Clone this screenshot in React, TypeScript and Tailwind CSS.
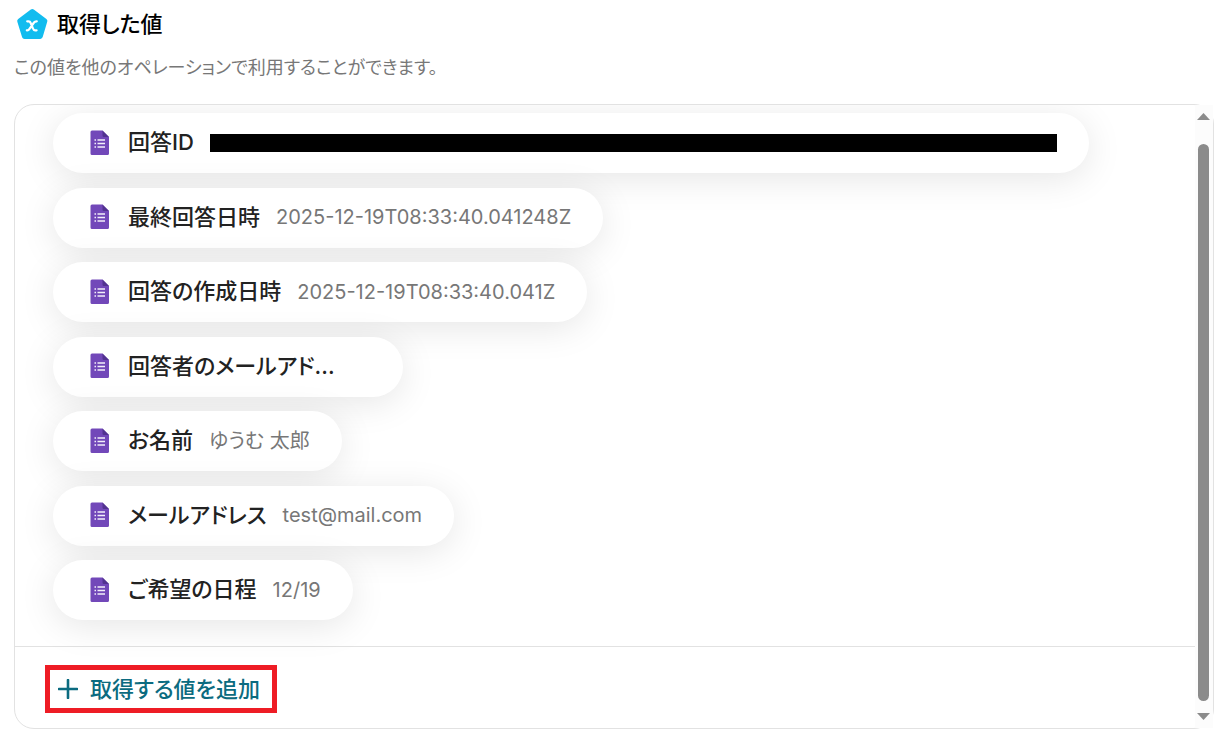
import React from "react";

type FormValue = {
  label: string;
  value?: string;
  redacted?: boolean;
};

const formValues: FormValue[] = [
  { label: "回答ID", redacted: true },
  { label: "最終回答日時", value: "2025-12-19T08:33:40.041248Z" },
  { label: "回答の作成日時", value: "2025-12-19T08:33:40.041Z" },
  { label: "回答者のメールアド..." },
  { label: "お名前", value: "ゆうむ 太郎" },
  { label: "メールアドレス", value: "test@mail.com" },
  { label: "ご希望の日程", value: "12/19" },
];

function OutputIcon() {
  return (
    <svg width="32" height="32" viewBox="0 0 32 32" className="shrink-0" aria-hidden="true">
      <path
        d="M16.3 3.6 28.900 12.900 24.300 28.400H8.500L3.700 12.900Z"
        fill="#12bcef"
        stroke="#12bcef"
        strokeWidth="5"
        strokeLinejoin="round"
      />
      <path
        d="M11.200 13.300H12.600C13.700 13.300 14.300 13.900 14.700 15L16.900 20.300C17.400 21.600 18 22.300 19.200 22.300H20.600M20.800 13.300H20.300C19.300 13.300 18.600 13.700 18 14.500L13.500 20.900C12.900 21.800 12.300 22.300 11.300 22.300H10.800"
        fill="none"
        stroke="#fff"
        strokeWidth="2.2"
        strokeLinecap="round"
      />
    </svg>
  );
}

function FormsIcon() {
  return (
    <svg width="20" height="26" viewBox="0 0 20 26" className="shrink-0" aria-hidden="true">
      <path
        d="M2 .5h10.500L19 7v16.500a1.500 1.500 0 0 1-1.500 1.500h-15.500A1.500 1.500 0 0 1 .5 23.500V2A1.500 1.500 0 0 1 2 .5Z"
        fill="#7248b9"
      />
      <path d="M12.500.5 19 7h-5a1.500 1.500 0 0 1-1.500-1.500Z" fill="#523390" />
      <path
        d="M4.500 9.200H6v1.600H4.500zM7.500 9.200h7.500v1.600H7.500zM4.500 12.700H6v1.600H4.500zM7.500 12.700h7.500v1.600H7.500zM4.500 16.200H6v1.600H4.500zM7.500 16.200h7.500v1.600H7.500z"
        fill="#f3effa"
      />
    </svg>
  );
}

function PlusIcon() {
  return (
    <svg width="20" height="20" viewBox="0 0 20 20" className="shrink-0" aria-hidden="true">
      <path d="M10 1v18M1 10h18" stroke="currentColor" strokeWidth="2.600" strokeLinecap="round" />
    </svg>
  );
}

function ValuePill({ item }: { item: FormValue }) {
  return (
    <li className="flex h-[60px] max-w-full items-center rounded-full bg-white pb-px pl-[37px] pr-8 shadow-[0_6px_36px_rgba(0,0,0,0.1)]">
      <FormsIcon />
      <span className="ml-[18px] whitespace-nowrap text-[22px] font-medium text-[#222]">{item.label}</span>
      {item.redacted && <span className="ml-4 h-[18px] w-[847px] bg-black" />}
      {item.value && (
        <span className="ml-4 whitespace-nowrap text-[20px] text-[#777]">{item.value}</span>
      )}
      {/* empty answers still keep some room after the label */}
      {!item.value && !item.redacted && <span className="w-9" />}
    </li>
  );
}

function ScrollBar() {
  return (
    <div className="flex w-[18px] shrink-0 flex-col items-center bg-[#fcfcfc] py-2 pr-px" aria-hidden="true">
      <svg width="13" height="7" viewBox="0 0 13 7">
        <path d="M6.500 0 13 7H0Z" fill="#8b8b8b" />
      </svg>
      <div className="mb-3 mt-6 w-[11px] grow rounded-full bg-[#8b8b8b]" />
      <svg width="13" height="7" viewBox="0 0 13 7">
        <path d="M0 0h13L6.500 7Z" fill="#8b8b8b" />
      </svg>
    </div>
  );
}

export default function App() {
  return (
    <main className="bg-white pb-3 pl-[14px] pr-2 pt-2 font-['Inter','Noto_Sans_CJK_JP',sans-serif] [font-feature-settings:'palt']">
      <header>
        <div className="flex h-8 items-center gap-[9px] pl-[2px]">
          <OutputIcon />
          <h1 className="text-[22px] font-medium text-black">取得した値</h1>
        </div>
        <p className="mt-4 text-[18px] leading-6 text-[#777]">
          この値を他のオペレーションで利用することができます。
        </p>
      </header>

      <section className="mt-6 flex rounded-[20px] border border-[#e2e2e2]">
        <div className="min-w-0 grow overflow-hidden rounded-l-[19px]">
          <ul className="flex min-h-[541px] flex-col items-start justify-between pb-[26px] pl-[38px] pr-4 pt-2">
            {formValues.map((item) => (
              <ValuePill key={item.label} item={item} />
            ))}
          </ul>
          <div className="border-t border-[#e2e2e2] pb-[15px] pl-[30px] pt-[18px]">
            <button
              type="button"
              className="flex h-12 items-center gap-3 border-[5px] border-[#ee1c25] pl-2 pr-3 text-[22px] font-medium text-[#0b6b80]"
            >
              <PlusIcon />
              取得する値を追加
            </button>
          </div>
        </div>
        <ScrollBar />
      </section>
    </main>
  );
}
